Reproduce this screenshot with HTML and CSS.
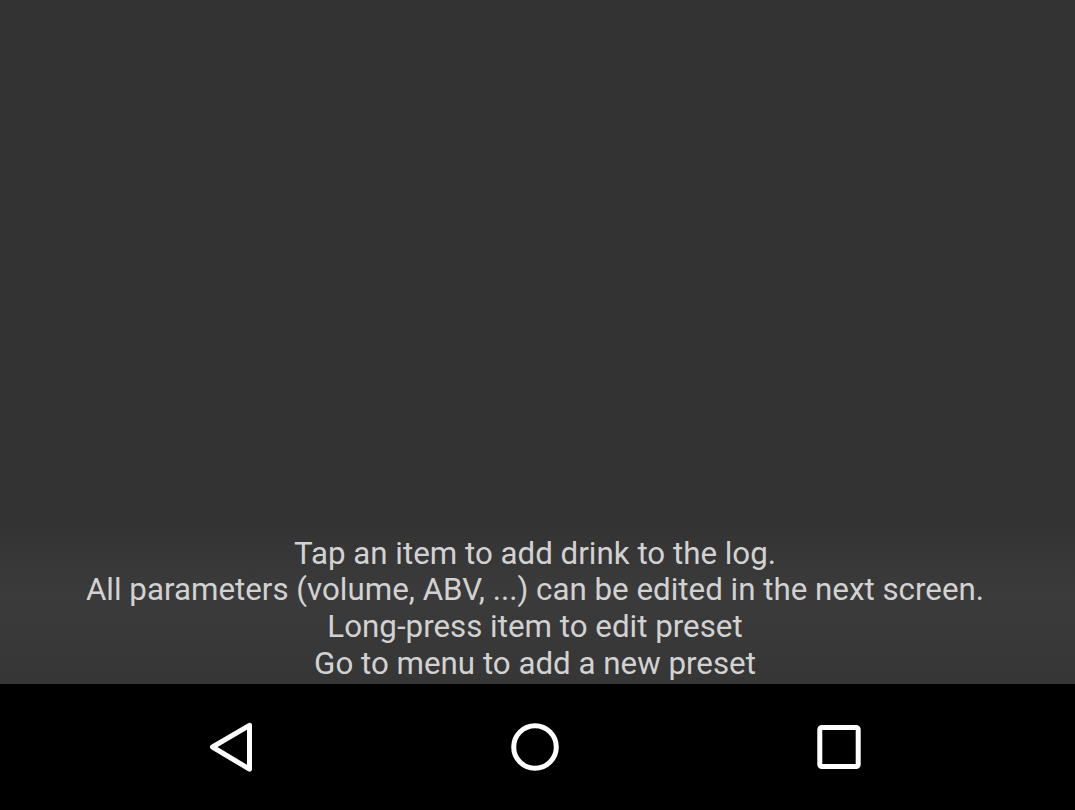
FILE: index.html
```html
<!DOCTYPE html>
<html>
<head>
<meta charset="utf-8">
<link rel="stylesheet" href="styles.css">
</head>
<body>
<div class="screen">
  <main class="content">
    <div class="hint">
      <p>Tap an item to add drink to the log.</p>
      <p>All parameters (volume, ABV, ...) can be edited in the next screen.</p>
      <p>Long-press item to edit preset</p>
      <p>Go to menu to add a new preset</p>
    </div>
  </main>
  <nav class="navbar">
    <button class="nav-btn" aria-label="Back">
      <svg width="60" height="60" viewBox="0 0 60 60"><path d="M48.5 8.3 L11.5 30 L48.5 52.2 Z" fill="none" stroke="#fff" stroke-width="5" stroke-linejoin="round"/></svg>
    </button>
    <button class="nav-btn" aria-label="Home">
      <svg width="60" height="60" viewBox="0 0 60 60"><circle cx="30" cy="30" r="21.3" fill="none" stroke="#fff" stroke-width="5"/></svg>
    </button>
    <button class="nav-btn" aria-label="Recents">
      <svg width="60" height="60" viewBox="0 0 60 60"><rect x="10.8" y="10.5" width="38.4" height="39" rx="2" fill="none" stroke="#fff" stroke-width="5"/></svg>
    </button>
  </nav>
</div>
</body>
</html>
```

FILE: styles.css
```css
html, body {
  margin: 0;
  padding: 0;
  background: #000;
}
.screen {
  width: 1075px;
  height: 810px;
  display: flex;
  flex-direction: column;
}
.content {
  height: 684px;
  background: linear-gradient(to bottom, #333333 0px, #333333 520px, #3b3b3b 595px, #363636 684px);
  display: flex;
  flex-direction: column;
  justify-content: flex-end;
}
.hint {
  text-align: center;
  font-family: Roboto, "Noto Sans", sans-serif;
  font-size: 31.3px;
  line-height: 36.7px;
  color: #d2d2d2;
  padding: 0 5px 1.5px 0;
}
.hint p {
  margin: 0;
}
.navbar {
  height: 126px;
  background: #000;
  display: flex;
  align-items: center;
  justify-content: center;
  gap: 244px;
  padding-right: 5px;
}
.nav-btn {
  background: none;
  border: 0;
  padding: 0;
  width: 60px;
  height: 60px;
  display: flex;
}
```
